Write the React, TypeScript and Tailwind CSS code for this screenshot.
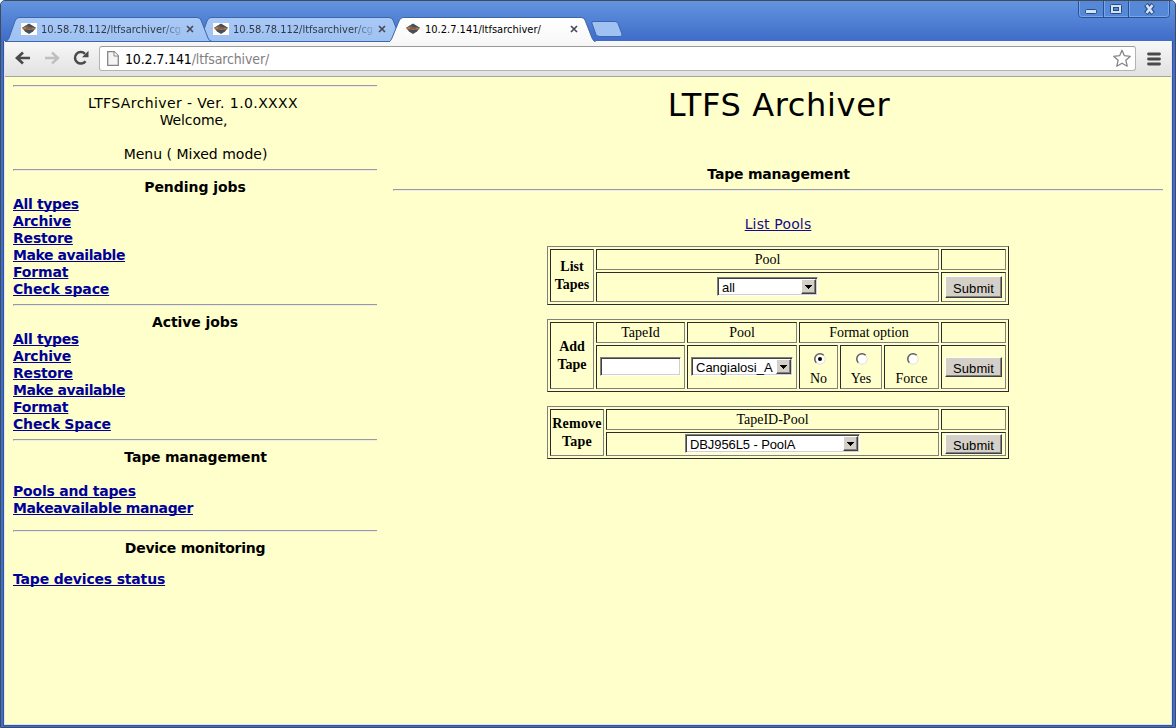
import React from "react";

const VERDANA = "font-['DejaVu_Sans',sans-serif]";
const TAHOMA = "font-['DejaVu_Sans_Condensed','DejaVu_Sans',sans-serif] [font-stretch:condensed]";

function Favicon() {
  return (
    <svg width="16" height="12" viewBox="0 0 16 12" className="shrink-0">
      <rect width="16" height="12" fill="#fdfdfd" />
      <path d="M8 .5 15 4.800 12 8.500 8 11 4 8.500 1 4.800Z" fill="#44505c" />
      <path d="M1 4.800 6 3.600 9 4.200 15 4.900 12 6.400 8 6.800 3 6.200Z" fill="#c9743a" />
      <path d="M5 4.400H11V5.400H5Z" fill="#44505c" />
    </svg>
  );
}

function Tab({ title, active }: { title: string; active?: boolean }) {
  return (
    <div className="flex h-6 w-[192px] shrink-0 items-center pl-4">
      <Favicon />
      <span
        className={
          active
            ? `ml-1 w-[140px] whitespace-nowrap pt-[2px] text-[11px] tracking-[0px] text-black ${TAHOMA}`
            : `ml-1 w-[140px] whitespace-nowrap pt-[2px] text-[11px] tracking-[0px] text-[#303848] [mask-image:linear-gradient(to_right,black_120px,transparent_144px)] ${TAHOMA}`
        }
      >
        {title}
      </span>
      <svg width="8" height="8" viewBox="0 0 8 8" className="ml-[5px] shrink-0">
        <path d="M1 1 7 7M7 1 1 7" stroke="#454b55" strokeWidth="1.700" />
      </svg>
    </div>
  );
}

function TabShapes() {
  return (
    <svg width="640" height="25" viewBox="0 0 640 25" className="absolute left-0 top-[17px]">
      <defs>
        <linearGradient id="idle" x1="0" y1="0" x2="0" y2="1">
          <stop offset="0" stopColor="#a9c9f7" />
          <stop offset="1" stopColor="#9fc2f2" />
        </linearGradient>
        <linearGradient id="front" x1="0" y1="0" x2="0" y2="1">
          <stop offset="0" stopColor="#ffffff" />
          <stop offset="1" stopColor="#f8f8f8" />
        </linearGradient>
      </defs>
      <path d="M197 24.500Q200 24 201 21L207 4Q208.500 .5 211 .5H389Q392 .5 393 3L400 21Q401 24 404 24.500Z" fill="url(#idle)" stroke="#3d66a8" />
      <path d="M5 24.500Q8 24 9 21L15 4Q16.500 .5 19 .5H197Q200 .5 201 3L208 21Q209 24 212 24.500Z" fill="url(#idle)" stroke="#3d66a8" />
      <path d="M388 26Q391 24 392 21L399 4Q400.500 .5 403 .5H581Q584 .5 585 3L592 21Q593 24 597 26Z" fill="url(#front)" stroke="#3d66a8" />
      <path d="M593 4.500H615Q617 4.500 618 6.500L622 17Q622.500 19.500 620 19.500H600Q597 19.500 596 17.500L592 6.500Q591.500 4.500 593 4.500Z" fill="#9fc2f3" stroke="#3a65b4" />
    </svg>
  );
}

function WindowButtons() {
  return (
    <svg width="94" height="19" viewBox="0 0 94 19" className="-mt-px ml-auto mr-1 shrink-0 self-start">
      <path d="M1.500 0V14Q1.500 17.500 5 17.500H89Q92.500 17.500 92.500 14V0" fill="#5688d8" stroke="#294f94" />
      <path d="M2.500 0V14Q2.500 16.500 5 16.500H89Q91.500 16.500 91.500 14V0" fill="none" stroke="#7ca5e6" />
      <path d="M26.500 0V17M51.500 0V17" stroke="#294f94" />
      <path d="M27.500 1V16M52.500 1V16" stroke="#7ca5e6" />
      <rect x="8.500" y="9.500" width="11" height="4" rx="1" fill="#d3e2f8" stroke="#294a7c" />
      <rect x="33.500" y="4.500" width="11" height="9" rx="1" fill="#d3e2f8" stroke="#294a7c" />
      <rect x="36.500" y="7.500" width="5" height="3" fill="#5688d8" stroke="#294a7c" />
      <path d="M69 4.500 76 13.500M76 4.500 69 13.500" stroke="#294a7c" strokeWidth="4.600" />
      <path d="M69.500 5 75.500 13M75.500 5 69.500 13" stroke="#d3e2f8" strokeWidth="2.600" />
    </svg>
  );
}

function Toolbar() {
  return (
    <div className="flex h-9 shrink-0 items-center border-b border-[#a5a5a5] bg-linear-to-b from-[#f8f8f8] to-[#e1e1e1] pl-[10px]">
      <svg width="16" height="14" viewBox="0 0 16 14" className="-mt-px">
        <path d="M8 1.500 2 7 8 12.500M2 7H15" fill="none" stroke="#4a4a4a" strokeWidth="2.700" />
      </svg>
      <svg width="16" height="14" viewBox="0 0 16 14" className="-mt-px ml-[13px]">
        <path d="M8 1.500 14 7 8 12.500M14 7H1" fill="none" stroke="#bfbfbf" strokeWidth="2.400" />
      </svg>
      <svg width="16" height="16" viewBox="0 0 16 16" className="-mt-px ml-[13px]">
        <path d="M12.500 11.200A5.800 5.800 0 1 1 12 3.800" fill="none" stroke="#4a4a4a" strokeWidth="2.500" />
        <path d="M15.500 .8V7.300H9Z" fill="#4a4a4a" />
      </svg>
      <div className="ml-[10px] flex h-[25px] w-[1037px] items-center rounded-[3px] border border-[#b3b3b3] border-t-[#9b9b9b] bg-white pl-[7px]">
        <svg width="12" height="15" viewBox="0 0 12 15">
          <path d="M.7 .7H7.200L11.300 4.800V14.300H.7Z" fill="#f4f4f4" stroke="#858585" strokeWidth="1.300" />
          <path d="M7 .7V5H11.300" fill="#fff" stroke="#858585" />
        </svg>
        <span className={`ml-[6px] whitespace-nowrap text-[14px] leading-5 tracking-[-0.14px] text-[#808080] ${TAHOMA}`}>
          <span className="text-black">10.2.7.141</span>/ltfsarchiver/
        </span>
        <svg width="20" height="19" viewBox="0 0 20 19" className="ml-auto mr-[3px]">
          <path d="M10 1.300 12.400 6.700 18.300 7.300 13.900 11.300 15.200 17.200 10 14.200 4.800 17.200 6.100 11.300 1.700 7.300 7.600 6.700Z" fill="#fff" stroke="#858585" strokeWidth="1.300" strokeLinejoin="round" />
        </svg>
      </div>
      <svg width="14" height="14" viewBox="0 0 14 14" className="ml-[11px]">
        <path d="M1.500 2H12.500M1.500 7H12.500M1.500 12H12.500" stroke="#4a4a4a" strokeWidth="2.800" strokeLinecap="round" />
      </svg>
    </div>
  );
}

function Rule() {
  return <div className="h-[2px] border-l border-t border-b border-[#9a9a9a] border-b-[#ececec]" />;
}

function Heading({ children, className = "tracking-[-0.1px]" }: { children: React.ReactNode; className?: string }) {
  return <div className={`text-center font-bold ${className}`}>{children}</div>;
}

function Links({ items }: { items: [string, string][] }) {
  return (
    <ul className="font-bold text-[#000099]">
      {items.map(([label, tracking]) => (
        <li key={label} className="h-[17px]">
          <a className={`underline decoration-1 underline-offset-1 [text-decoration-skip-ink:none] ${tracking}`}>{label}</a>
        </li>
      ))}
    </ul>
  );
}

const JOB_LINKS: [string, string][] = [
  ["All types", "tracking-[-0.35px]"],
  ["Archive", "tracking-[-0.2px]"],
  ["Restore", "tracking-[-0.2px]"],
  ["Make available", "tracking-[-0.43px]"],
  ["Format", "tracking-[-0.15px]"],
];

function Sidebar() {
  return (
    <nav className="w-[364px] shrink-0 whitespace-nowrap text-[14px] leading-[17px]">
      <Rule />
      <div className="mt-[8px] h-[74px] text-center">
        <div className="pr-1 tracking-[0.4px]">LTFSArchiver - Ver. 1.0.XXXX</div>
        <div className="pr-[3px] tracking-[-0.1px]">Welcome,</div>
        <div className="pl-px pt-[17px]">Menu ( Mixed mode)</div>
      </div>
      <Rule />
      <div className="mt-[8px] h-[125px]">
        <Heading className="tracking-[-0.05px]">Pending jobs</Heading>
        <Links items={[...JOB_LINKS, ["Check space", "tracking-[-0.15px]"]]} />
      </div>
      <Rule />
      <div className="mt-[8px] h-[125px]">
        <Heading>Active jobs</Heading>
        <Links items={[...JOB_LINKS, ["Check Space", "tracking-[-0.15px]"]]} />
      </div>
      <Rule />
      <div className="mt-[8px] h-[81px]">
        <Heading className="pl-px tracking-[-0.2px]">Tape management</Heading>
        <div className="h-[17px]" />
        <Links items={[["Pools and tapes", "tracking-[-0.2px]"], ["Makeavailable manager", "tracking-[-0.38px]"]]} />
      </div>
      <Rule />
      <div className="mt-[8px]">
        <Heading className="tracking-[-0.25px]">Device monitoring</Heading>
        <div className="h-[14px]" />
        <Links items={[["Tape devices status", "tracking-[-0.18px]"]]} />
      </div>
    </nav>
  );
}

function Cell({ className = "", children }: { className?: string; children?: React.ReactNode }) {
  return (
    <div className={`flex items-center justify-center border border-b-[#808080] border-l-[#2b2b2b] border-r-[#808080] border-t-[#2b2b2b] ${className}`}>
      {children}
    </div>
  );
}

const TABLE =
  "grid w-[462px] gap-[2px] border border-b-[#2b2b2b] border-l-[#808080] border-r-[#2b2b2b] border-t-[#808080] p-[2px] text-center text-[14px] leading-[18px] font-['Liberation_Serif',serif]";

const SUNKEN =
  "border border-b-white border-l-[#808080] border-r-white border-t-[#808080] bg-white shadow-[inset_1px_1px_0_#404040,inset_-1px_-1px_0_#d4d0c8]";

function Select({ value, className }: { value: string; className: string }) {
  return (
    <div className={`-mt-px flex h-[19px] items-stretch p-px font-['Liberation_Sans',sans-serif] text-[13px] leading-[18px] ${SUNKEN} ${className}`}>
      <span className="grow whitespace-nowrap pl-[3px] text-left">{value}</span>
      <span className="flex w-[15px] shrink-0 items-center justify-center border border-b-[#404040] border-l-white border-r-[#404040] border-t-white bg-[#d4d0c8] shadow-[inset_-1px_-1px_0_#808080]">
        <svg width="7" height="4" viewBox="0 0 7 4" shapeRendering="crispEdges">
          <path d="M0 0H7L3.500 4Z" fill="#000" />
        </svg>
      </span>
    </div>
  );
}

function Submit({ className }: { className: string }) {
  return (
    <button className={`flex w-[57px] items-center justify-center border border-b-[#404040] border-l-white border-r-[#404040] border-t-white bg-[#d4d0c8] pt-[3px] font-['Liberation_Sans',sans-serif] text-[13px] leading-[18px] tracking-[0.1px] shadow-[inset_-1px_-1px_0_#808080] ${className}`}>
      Submit
    </button>
  );
}

function Radio({ label, checked }: { label: string; checked?: boolean }) {
  return (
    <Cell className="flex-col !justify-start pt-[7px]">
      <svg width="12" height="12" viewBox="0 0 12 12" className="ml-[2px] shrink-0">
        <circle cx="6" cy="6" r="5.200" fill="#fff" stroke="#e4e1d8" />
        <path d="M2.300 9.700A5.200 5.200 0 0 1 9.700 2.300" fill="none" stroke="#606060" strokeWidth="1.500" />
        {checked && <circle cx="6" cy="6" r="2" fill="#000" />}
      </svg>
      <span className="mt-[5px]">{label}</span>
    </Cell>
  );
}

function MainPane() {
  return (
    <main className="flex w-[770px] shrink-0 flex-col items-center text-[14px] leading-[17px]">
      <h1 className="mt-[1px] h-[39px] pl-[2px] text-[32px] leading-[39px] tracking-[0.65px]">LTFS Archiver</h1>
      <div className="mt-[41px] pl-px font-bold tracking-[-0.2px]">Tape management</div>
      <div className="mt-[6px] w-full">
        <Rule />
      </div>
      <a className="mt-[25px] tracking-[0.15px] text-[#1a0a88] underline decoration-1 underline-offset-1">List Pools</a>

      <div className={`mt-[13px] grid-cols-[44px_343px_65px] grid-rows-[21px_30px] ${TABLE}`}>
        <Cell className="row-span-2 font-bold">List<br />Tapes</Cell>
        <Cell>Pool</Cell>
        <Cell />
        <Cell><Select value="all" className="w-[101px]" /></Cell>
        <Cell><Submit className="h-[22px]" /></Cell>
      </div>

      <div className={`mt-[14px] grid-cols-[44px_89px_110px_39px_42px_55px_65px] grid-rows-[21px_44px] ${TABLE}`}>
        <Cell className="row-span-2 font-bold">Add<br />Tape</Cell>
        <Cell>TapeId</Cell>
        <Cell>Pool</Cell>
        <Cell className="col-span-3">Format option</Cell>
        <Cell />
        <Cell><div className={`-mt-px h-[19px] w-[81px] ${SUNKEN}`} /></Cell>
        <Cell><Select value="Cangialosi_A" className="w-[102px]" /></Cell>
        <Radio label="No" checked />
        <Radio label="Yes" />
        <Radio label="Force" />
        <Cell><Submit className="h-[20px]" /></Cell>
      </div>

      <div className={`mt-[14px] grid-cols-[54px_333px_65px] grid-rows-[21px_24px] ${TABLE}`}>
        <Cell className="row-span-2 font-bold tracking-[0.2px]">Remove<br />Tape</Cell>
        <Cell>TapeID-Pool</Cell>
        <Cell />
        <Cell><Select value="DBJ956L5 - PoolA" className="w-[175px] tracking-[-0.1px]" /></Cell>
        <Cell><Submit className="h-[20px]" /></Cell>
      </div>
    </main>
  );
}

export default function App() {
  return (
    <div className={`flex h-[728px] w-[1176px] flex-col overflow-hidden rounded-t-[5px] border border-[#444a55] bg-[#3f6fca] text-black ${VERDANA}`}>
      <header className="relative z-10 flex h-10 shrink-0 bg-linear-to-b from-[#6394e0] to-[#3f6cc8]">
        <div className="absolute -left-px -top-px">
          <TabShapes />
        </div>
        <div className="relative flex pl-1 pt-4">
          <Tab title="10.58.78.112/ltfsarchiver/cg" />
          <Tab title="10.58.78.112/ltfsarchiver/cg" />
          <Tab title="10.2.7.141/ltfsarchiver/" active />
        </div>
        <WindowButtons />
      </header>
      <div className="mx-[3px] mb-[2px] flex grow flex-col border border-t-0 border-[#dfe3ea] bg-[#ffffcc] outline outline-[#2f559c]">
        <Toolbar />
        <div className="flex gap-4 pl-2 pt-2">
          <Sidebar />
          <MainPane />
        </div>
      </div>
    </div>
  );
}
